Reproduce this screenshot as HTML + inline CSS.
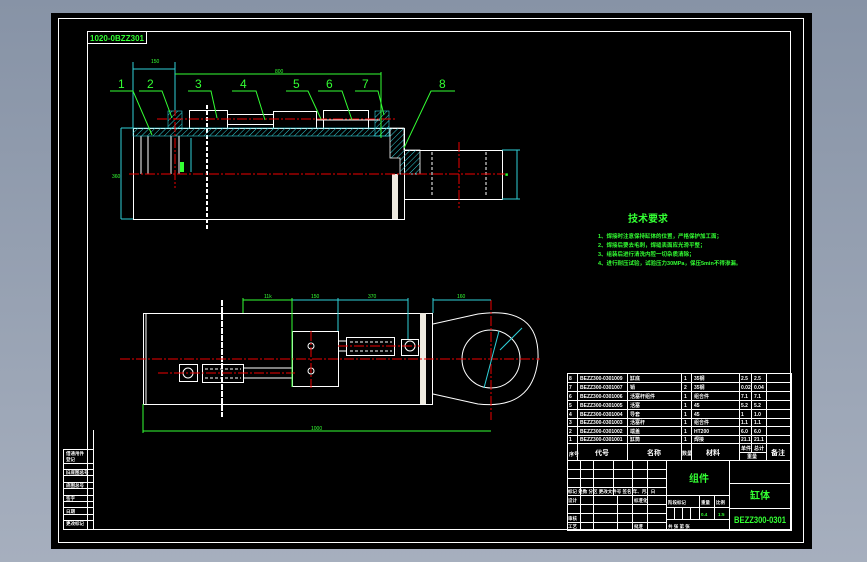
<!DOCTYPE html>
<html><head><meta charset="utf-8"><style>
html,body{margin:0;padding:0;width:867px;height:562px;overflow:hidden;background:linear-gradient(180deg,#8793a6 0%,#a6afbe 100%);}
svg{position:absolute;left:0;top:0;}
text{font-family:"Liberation Sans","Noto Sans CJK SC",sans-serif;}
</style></head><body>
<svg width="867" height="562" viewBox="0 0 867 562" xmlns="http://www.w3.org/2000/svg">
<defs>
<pattern id="h" width="4" height="4" patternUnits="userSpaceOnUse" patternTransform="rotate(45)">
<line x1="0" y1="0" x2="0" y2="4" stroke="#2fd0d8" stroke-width="1"/></pattern>
</defs>
<rect x="51" y="13" width="761" height="536" fill="#000"/>
<g fill="none" stroke="#fff" stroke-width="1">
<rect x="58.5" y="18.5" width="745" height="524"/>
<rect x="87.5" y="31.5" width="703" height="498"/>
<rect x="87.5" y="31.5" width="59" height="12"/>
</g>
<text x="90" y="41" fill="#3f3" font-size="8" font-weight="bold" textLength="54" lengthAdjust="spacingAndGlyphs">1020-0BZZ301</text>

<!-- TOP VIEW -->
<g stroke="#fff" fill="none" stroke-width="1">
<rect x="133.5" y="128.5" width="271" height="91"/>
<line x1="141" y1="136" x2="141" y2="174"/><line x1="148" y1="136" x2="148" y2="174"/>
<line x1="171" y1="136" x2="171" y2="174"/><line x1="179" y1="136" x2="179" y2="174"/>
<rect x="189.5" y="110.5" width="38" height="18"/>
<rect x="227.5" y="114.5" width="46" height="10"/>
<rect x="273.5" y="111.5" width="43" height="17"/>
<rect x="323.5" y="110.5" width="45" height="18"/>
<line x1="316" y1="120" x2="380" y2="120"/>
<rect x="404.5" y="150.5" width="98" height="49"/>
<line x1="432" y1="152" x2="432" y2="196" stroke-dasharray="3,2"/>
<line x1="486" y1="152" x2="486" y2="196" stroke-dasharray="3,2"/>
<line x1="207" y1="105" x2="207" y2="230" stroke-dasharray="4,2" stroke-width="2"/>
</g>
<rect x="133" y="128" width="257" height="8" fill="url(#h)" stroke="#2fd0d8" stroke-width="0.6"/>
<rect x="168" y="111" width="14" height="17" fill="url(#h)" stroke="#2fd0d8" stroke-width="0.6"/>
<rect x="375" y="111" width="14" height="25" fill="url(#h)" stroke="#2fd0d8" stroke-width="0.6"/>
<path d="M390 128 L404 128 L404 150 L420 150 L420 174 L400 174 L400 158 L390 158 Z" fill="url(#h)" stroke="#fff" stroke-width="0.8"/>
<rect x="392" y="174" width="6" height="45" fill="#eeeae0"/>
<rect x="180" y="162" width="4" height="10" fill="#3f3"/>
<g stroke="#e00" stroke-width="1" stroke-dasharray="10,2,2,2">
<line x1="129" y1="174" x2="505" y2="174"/>
<line x1="157" y1="119" x2="395" y2="119"/>
<line x1="175" y1="106" x2="175" y2="188"/>
<line x1="459" y1="142" x2="459" y2="208"/>
</g>
<g stroke="#2fd0d8" stroke-width="1">
<line x1="133" y1="62" x2="133" y2="128"/><line x1="133" y1="69" x2="175" y2="69"/><line x1="175" y1="62" x2="175" y2="110"/>
<line x1="121" y1="128" x2="133" y2="128"/><line x1="121" y1="219" x2="133" y2="219"/><line x1="121" y1="128" x2="121" y2="219"/>
<line x1="502" y1="150" x2="520" y2="150"/><line x1="502" y1="199" x2="520" y2="199"/><line x1="517" y1="150" x2="517" y2="199"/>
<line x1="191" y1="138" x2="191" y2="172"/>
</g>
<g stroke="#3f3" stroke-width="1" fill="none">
<line x1="175" y1="74" x2="381" y2="74"/><line x1="381" y1="72" x2="381" y2="138"/>
<polyline points="110,91 133,91 152,135"/>
<polyline points="139,91 162,91 172,118"/>
<polyline points="188,91 211,91 217,118"/>
<polyline points="232,91 256,91 265,120"/>
<polyline points="286,91 308,91 321,119"/>
<polyline points="318,91 342,91 352,120"/>
<polyline points="355,91 378,91 384,115"/>
<polyline points="455,91 431,91 404,148"/>
</g>
<g fill="#3f3" font-size="12">
<text x="118" y="88">1</text><text x="147" y="88">2</text><text x="195" y="88">3</text><text x="240" y="88">4</text>
<text x="293" y="88">5</text><text x="326" y="88">6</text><text x="362" y="88">7</text><text x="439" y="88">8</text>
</g>
<g fill="#3f3" font-size="5"><text x="151" y="63">150</text><text x="275" y="73">800</text><text x="112" y="178">360</text><text x="505" y="176">■</text></g>

<!-- BOTTOM VIEW -->
<g stroke="#fff" fill="none" stroke-width="1">
<rect x="143.5" y="313.5" width="289" height="91"/>
<line x1="146" y1="314" x2="146" y2="404"/>
<rect x="292.5" y="331.5" width="46" height="55"/>
<rect x="346.5" y="337.5" width="48" height="18"/>
<rect x="401.5" y="339.5" width="17" height="16"/>
<circle cx="410" cy="346" r="5"/>
<rect x="179.5" y="364.5" width="18" height="17"/>
<circle cx="188" cy="373" r="5"/>
<rect x="202.5" y="364.5" width="41" height="18"/>
<line x1="243" y1="368" x2="292" y2="368"/><line x1="243" y1="378" x2="292" y2="378"/>
<line x1="338" y1="341" x2="346" y2="341"/><line x1="338" y1="351" x2="346" y2="351"/>
<line x1="222" y1="300" x2="222" y2="417" stroke-width="2" stroke-dasharray="6,1"/>
<path d="M433 324 L478 314 Q540 305 538 359 Q533 410 478 404 L433 394"/>
<circle cx="491" cy="359" r="29"/>
<circle cx="311" cy="346" r="3"/><circle cx="311" cy="371" r="3"/>
</g>
<g stroke="#fff" stroke-dasharray="3,2"><line x1="350" y1="342" x2="392" y2="342"/><line x1="350" y1="351" x2="392" y2="351"/><line x1="205" y1="369" x2="241" y2="369"/><line x1="205" y1="378" x2="241" y2="378"/></g>
<rect x="420" y="313" width="6" height="91" fill="#eeeae0"/>
<g stroke="#e00" stroke-width="1" stroke-dasharray="10,2,2,2">
<line x1="120" y1="359" x2="540" y2="359"/>
<line x1="311" y1="331" x2="311" y2="388"/>
<line x1="491" y1="300" x2="491" y2="420"/>
<line x1="338" y1="346" x2="420" y2="346"/>
<line x1="158" y1="373" x2="295" y2="373"/>
</g>
<g stroke="#2fd0d8" stroke-width="1">
<line x1="292" y1="300" x2="408" y2="300"/><line x1="338" y1="298" x2="338" y2="331"/><line x1="408" y1="298" x2="408" y2="339"/>
<line x1="433" y1="300" x2="491" y2="300"/><line x1="433" y1="298" x2="433" y2="313"/>
<line x1="484" y1="388" x2="499" y2="331"/><line x1="500" y1="350" x2="522" y2="328"/>
</g>
<g stroke="#3f3" stroke-width="1">
<line x1="243" y1="300" x2="292" y2="300"/><line x1="243" y1="298" x2="243" y2="313"/><line x1="292" y1="298" x2="292" y2="387"/>
<line x1="143" y1="431" x2="491" y2="431"/><line x1="143" y1="404" x2="143" y2="433"/>
</g>
<g fill="#3f3" font-size="5"><text x="264" y="298">11k</text><text x="311" y="298">150</text><text x="368" y="298">370</text><text x="457" y="298">160</text><text x="311" y="430">1000</text></g>

<!-- TECH REQ -->
<g fill="#3f3" font-weight="bold">
<text x="628" y="222" font-size="10">技术要求</text>
<text x="598" y="238" font-size="5.5">1、焊接时注意保持缸体的位置，严格保护加工面；</text>
<text x="598" y="247" font-size="5.5">2、焊接后要去毛刺，焊缝表面应光滑平整；</text>
<text x="598" y="256" font-size="5.5">3、组装后进行清洗内腔一切杂质清除；</text>
<text x="598" y="265" font-size="5.5">4、进行耐压试验，试验压力30MPa，保压5min不得渗漏。</text>
</g>

<!-- PARTS TABLE -->
<g stroke="#fff" stroke-width="1" fill="none">
<rect x="567.5" y="373.5" width="224" height="157"/>
<line x1="567" y1="382.5" x2="791" y2="382.5"/><line x1="567" y1="391.5" x2="791" y2="391.5"/>
<line x1="567" y1="400.5" x2="791" y2="400.5"/><line x1="567" y1="409.5" x2="791" y2="409.5"/>
<line x1="567" y1="418.5" x2="791" y2="418.5"/><line x1="567" y1="426.5" x2="791" y2="426.5"/>
<line x1="567" y1="435.5" x2="791" y2="435.5"/><line x1="567" y1="443.5" x2="791" y2="443.5"/>
<line x1="567" y1="460.5" x2="791" y2="460.5"/>
<line x1="577.5" y1="373" x2="577.5" y2="460"/><line x1="627.5" y1="373" x2="627.5" y2="460"/>
<line x1="681.5" y1="373" x2="681.5" y2="460"/><line x1="691.5" y1="373" x2="691.5" y2="460"/>
<line x1="739.5" y1="373" x2="739.5" y2="460"/><line x1="751.5" y1="373" x2="751.5" y2="452"/>
<line x1="766.5" y1="373" x2="766.5" y2="460"/><line x1="739" y1="452.5" x2="766" y2="452.5"/>
<line x1="567" y1="469.5" x2="667" y2="469.5"/><line x1="567" y1="478.5" x2="667" y2="478.5"/>
<line x1="567" y1="487.5" x2="667" y2="487.5"/><line x1="567" y1="495.5" x2="667" y2="495.5"/>
<line x1="567" y1="504.5" x2="667" y2="504.5"/><line x1="567" y1="513.5" x2="667" y2="513.5"/>
<line x1="567" y1="522.5" x2="667" y2="522.5"/>
<line x1="580.5" y1="460" x2="580.5" y2="530"/><line x1="593.5" y1="460" x2="593.5" y2="530"/>
<line x1="613.5" y1="460" x2="613.5" y2="495"/><line x1="617.5" y1="495" x2="617.5" y2="530"/>
<line x1="632.5" y1="460" x2="632.5" y2="530"/><line x1="647.5" y1="460" x2="647.5" y2="530"/>
<line x1="666.5" y1="460" x2="666.5" y2="530"/>
<line x1="666" y1="495.5" x2="729" y2="495.5"/><line x1="666" y1="507.5" x2="729" y2="507.5"/>
<line x1="666" y1="519.5" x2="729" y2="519.5"/>
<line x1="699.5" y1="495" x2="699.5" y2="519"/><line x1="714.5" y1="495" x2="714.5" y2="519"/>
<line x1="674.5" y1="507" x2="674.5" y2="519"/><line x1="682.5" y1="507" x2="682.5" y2="519"/><line x1="690.5" y1="507" x2="690.5" y2="519"/>
<line x1="729.5" y1="460" x2="729.5" y2="530"/>
<line x1="729" y1="483.5" x2="791" y2="483.5"/><line x1="729" y1="508.5" x2="791" y2="508.5"/>
</g>
<g fill="#fff" font-size="5" font-weight="bold">
<text x="569" y="380">8</text><text x="580" y="380">BEZZ300-0301009</text><text x="630" y="380">缸底</text><text x="684" y="380">1</text><text x="694" y="380">35钢</text><text x="741" y="380">2.5</text><text x="754" y="380">2.5</text>
<text x="569" y="389">7</text><text x="580" y="389">BEZZ300-0301007</text><text x="630" y="389">销</text><text x="684" y="389">2</text><text x="694" y="389">35钢</text><text x="741" y="389">0.02</text><text x="754" y="389">0.04</text>
<text x="569" y="398">6</text><text x="580" y="398">BEZZ300-0301006</text><text x="630" y="398">活塞杆组件</text><text x="684" y="398">1</text><text x="694" y="398">组合件</text><text x="741" y="398">7.1</text><text x="754" y="398">7.1</text>
<text x="569" y="407">5</text><text x="580" y="407">BEZZ300-0301005</text><text x="630" y="407">活塞</text><text x="684" y="407">1</text><text x="694" y="407">45</text><text x="741" y="407">5.2</text><text x="754" y="407">5.2</text>
<text x="569" y="416">4</text><text x="580" y="416">BEZZ300-0301004</text><text x="630" y="416">导套</text><text x="684" y="416">1</text><text x="694" y="416">45</text><text x="741" y="416">1</text><text x="754" y="416">1.0</text>
<text x="569" y="424">3</text><text x="580" y="424">BEZZ300-0301003</text><text x="630" y="424">活塞杆</text><text x="684" y="424">1</text><text x="694" y="424">组合件</text><text x="741" y="424">1.1</text><text x="754" y="424">1.1</text>
<text x="569" y="433">2</text><text x="580" y="433">BEZZ300-0301002</text><text x="630" y="433">端盖</text><text x="684" y="433">1</text><text x="694" y="433">HT200</text><text x="741" y="433">6.0</text><text x="754" y="433">6.0</text>
<text x="569" y="441">1</text><text x="580" y="441">BEZZ300-0301001</text><text x="630" y="441">缸筒</text><text x="684" y="441">1</text><text x="694" y="441">焊接</text><text x="741" y="441">21.1</text><text x="754" y="441">21.1</text>
<text x="741" y="450">单件</text><text x="754" y="450">总计</text><text x="747" y="458">重量</text>
<text x="569" y="456">序号</text>
</g>
<g fill="#fff" font-size="7" font-weight="bold">
<text x="595" y="455">代号</text><text x="647" y="455">名称</text><text x="682" y="455" font-size="5">数量</text><text x="706" y="455">材料</text><text x="771" y="455">备注</text>
</g>
<g fill="#fff" font-size="4.5" font-weight="bold">
<text x="568" y="493">标记 处数 分区 更改文件号 签名 年、月、日</text>
<text x="568" y="502">设计</text><text x="634" y="502">标准化</text>
<text x="568" y="520">审核</text><text x="568" y="528">工艺</text><text x="634" y="528">批准</text>
<text x="668" y="504">阶段标记</text><text x="701" y="504">重量</text><text x="716" y="504">比例</text>
<text x="668" y="528">共  张  第  张</text>
</g>
<g fill="#3f3" font-weight="bold">
<text x="689" y="482" font-size="10">组件</text>
<text x="750" y="499" font-size="10">缸体</text>
<text x="734" y="523" font-size="9" textLength="52" lengthAdjust="spacingAndGlyphs">BEZZ300-0301</text>
<text x="701" y="516" font-size="4.5">0.4</text><text x="718" y="516" font-size="4.5">1:5</text>
</g>

<!-- LEFT SIDE TABLE -->
<g stroke="#fff" fill="none" stroke-width="1">
<rect x="63.5" y="449.5" width="30" height="80"/>
<line x1="93.5" y1="430" x2="93.5" y2="530"/>
<line x1="63" y1="463.5" x2="93" y2="463.5"/><line x1="63" y1="469.5" x2="93" y2="469.5"/>
<line x1="63" y1="475.5" x2="93" y2="475.5"/><line x1="63" y1="482.5" x2="93" y2="482.5"/>
<line x1="63" y1="488.5" x2="93" y2="488.5"/><line x1="63" y1="495.5" x2="93" y2="495.5"/>
<line x1="63" y1="501.5" x2="93" y2="501.5"/><line x1="63" y1="507.5" x2="93" y2="507.5"/>
<line x1="63" y1="514.5" x2="93" y2="514.5"/><line x1="63" y1="520.5" x2="93" y2="520.5"/>
</g>
<g fill="#fff" font-size="4.5" font-weight="bold">
<text x="66" y="455">借通用件</text><text x="66" y="461">登记</text><text x="66" y="474">旧底图总号</text><text x="66" y="487">底图总号</text><text x="66" y="500">签字</text><text x="66" y="513">日期</text><text x="66" y="525">更改标记</text>
</g>
</svg>
</body></html>
